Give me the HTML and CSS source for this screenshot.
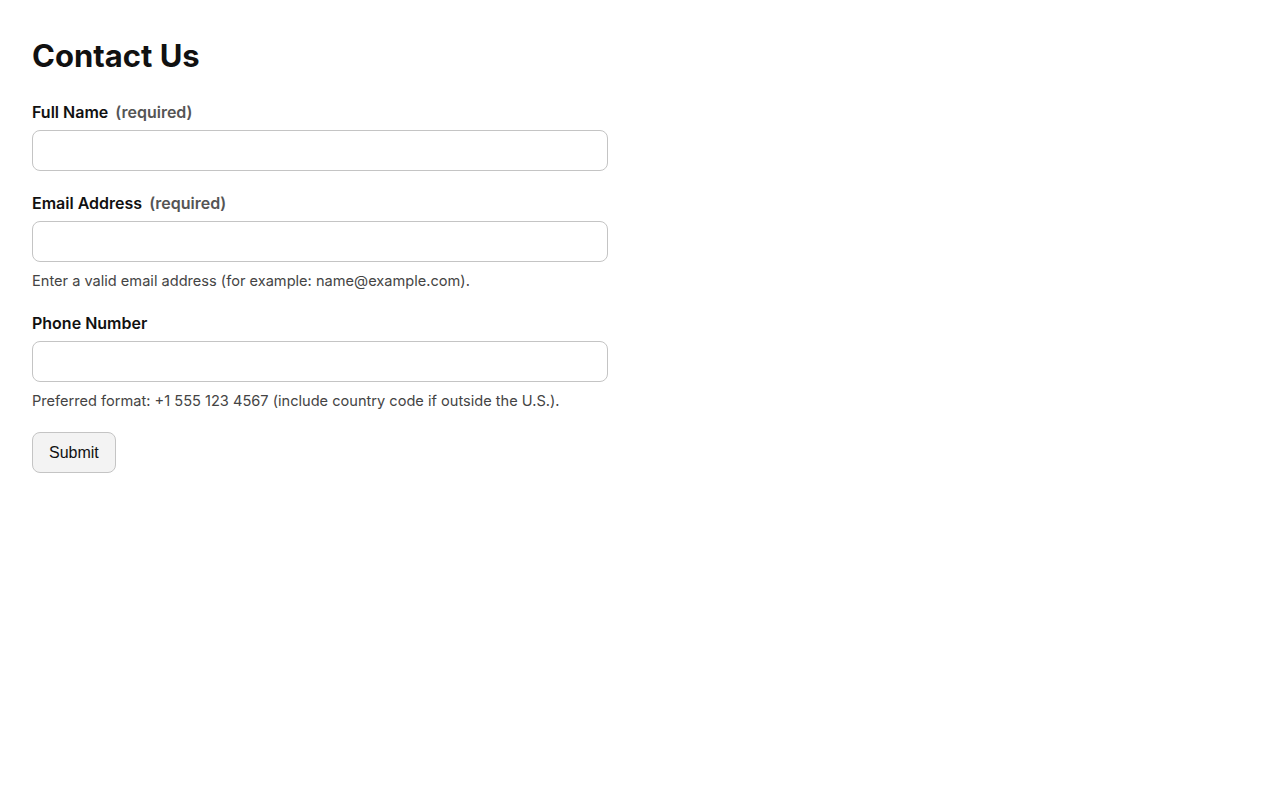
FILE: index.html
```html
<!doctype html>
<html lang="en">
<head>
	<meta charset="utf-8">
	<meta name="viewport" content="width=device-width, initial-scale=1.0">
	<title>Contact Us</title>
	<link rel="stylesheet" href="styles.css">
</head>
<body>
	<main class="page">
		<h1 class="page-title">Contact Us</h1>
		<form class="contact-form">
			<div class="field">
				<label class="field-label" for="full-name">Full Name <span class="field-req">(required)</span></label>
				<input class="field-input" type="text" id="full-name" required>
			</div>
			<div class="field">
				<label class="field-label" for="email">Email Address <span class="field-req">(required)</span></label>
				<input class="field-input" type="email" id="email" required>
				<p class="field-hint">Enter a valid email address (for example: name@example.com).</p>
			</div>
			<div class="field">
				<label class="field-label" for="phone">Phone Number</label>
				<input class="field-input" type="tel" id="phone">
				<p class="field-hint">Preferred format: +1 555 123 4567 (include country code if outside the U.S.).</p>
			</div>
			<button class="submit" type="submit">Submit</button>
		</form>
	</main>
</body>
</html>
```

FILE: styles.css
```css
* {
	box-sizing: border-box;
}
body {
	margin: 0;
	font-family: Inter, "Noto Sans", sans-serif;
	color: #111;
	background: #fff;
}

.page {
	padding: 32px;
	max-width: 640px;
}
.page-title {
	font-size: 31px;
	font-weight: 700;
	line-height: 1.2;
	margin: 5px 0 28px;
}

.field {
	display: flex;
	flex-direction: column;
	margin-bottom: 22px;
}
.field-label {
	font-size: 16px;
	font-weight: 600;
	line-height: 20px;
	margin-bottom: 8px;
}
.field-req {
	margin-left: 3px;
	color: #555;
}
.field-input {
	width: 100%;
	height: 41px;
	border: 1px solid #c4c4c4;
	border-radius: 8px;
	padding: 8px 12px;
	font: inherit;
}
.field-hint {
	margin: 9px 0 0;
	font-size: 14.6px;
	line-height: 20px;
	color: #444;
}

.submit {
	height: 41px;
	padding: 0 16px;
	margin-top: -1px;
	font-family: "Liberation Sans", Arial, sans-serif;
	font-size: 16px;
	color: #111;
	background: #f3f3f3;
	border: 1px solid #c4c4c4;
	border-radius: 8px;
}
```
